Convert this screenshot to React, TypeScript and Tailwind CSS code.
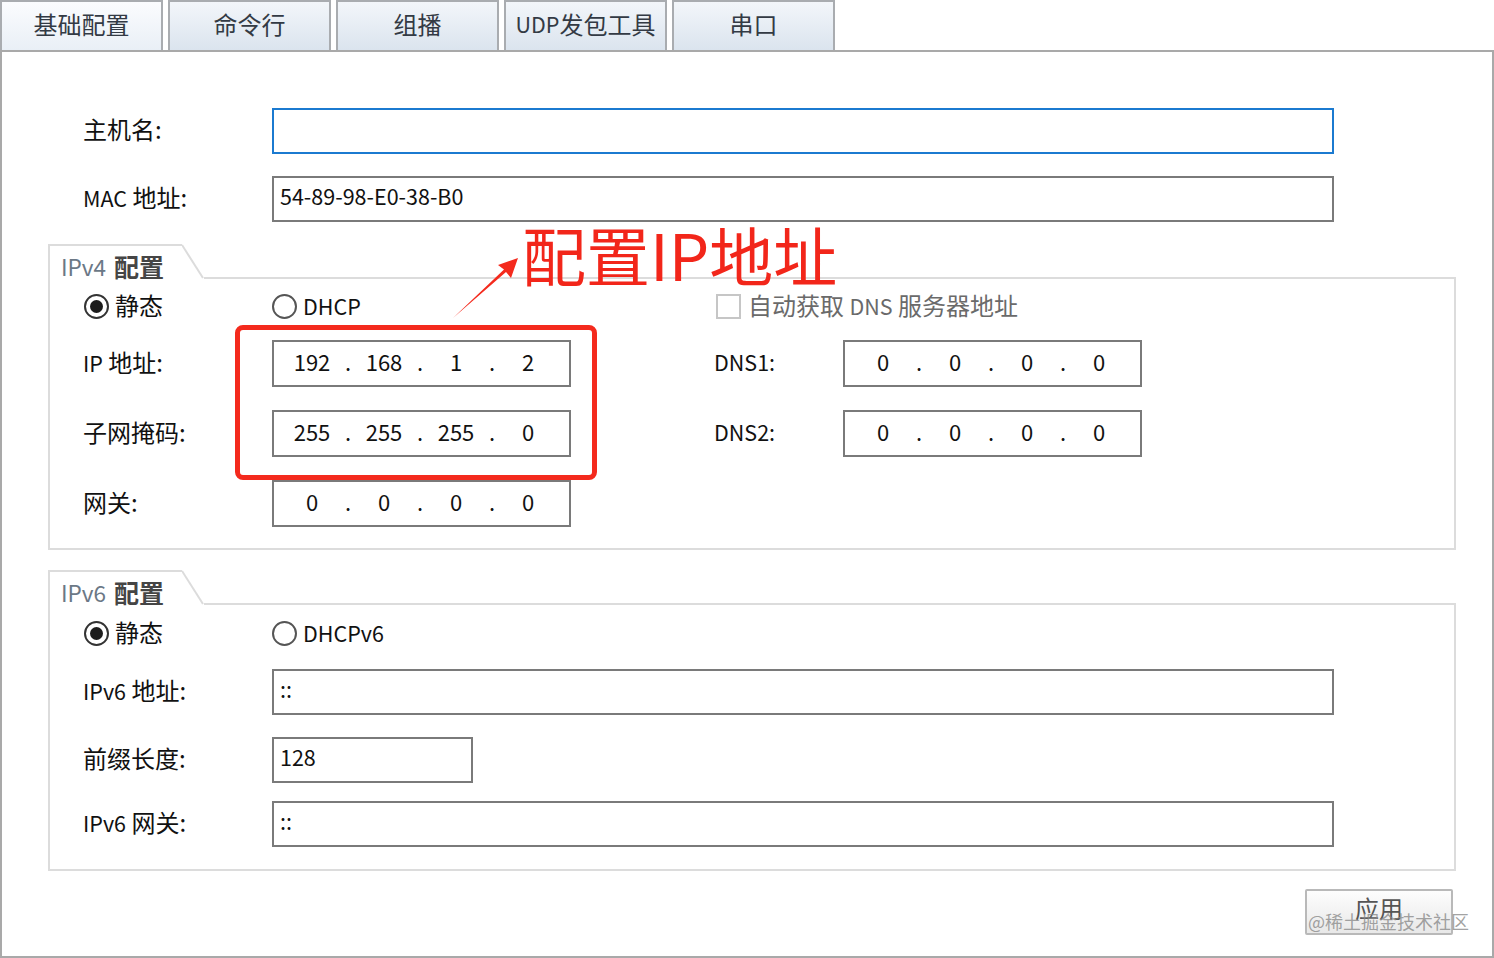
import React from "react";

const tabs = ["基础配置", "命令行", "组播", "UDP发包工具", "串口"];

function L({ children }: { children: React.ReactNode }) {
  return <span className="text-[21.5px]">{children}</span>;
}

function IpBox({ parts }: { parts: string[] }) {
  return (
    <div className="w-[299px] h-[47px] border-2 border-[#7a7a7a] bg-white flex items-center pl-[8px] pb-[6px] text-[22px] leading-none text-[#111]">
      {parts.map((p, i) => (
        <React.Fragment key={i}>
          <span className="w-[60px] text-center">{p}</span>
          {i < 3 && <span className="w-[12px] text-center">.</span>}
        </React.Fragment>
      ))}
    </div>
  );
}

function TextBox({ w, value, focus }: { w: string; value?: string; focus?: boolean }) {
  return (
    <div
      className={`${w} h-[46px] bg-white flex items-center pl-[6px] pb-[6px] text-[21.5px] leading-none text-[#111] border-2 ${
        focus ? "border-[#1b7ad0]" : "border-[#7a7a7a]"
      }`}
    >
      {value}
    </div>
  );
}

function Radio({ checked, children }: { checked?: boolean; children: React.ReactNode }) {
  return (
    <div className="flex items-center gap-[6px]">
      <div
        className={`w-[25px] h-[25px] rounded-full border-2 bg-white flex items-center justify-center ${
          checked ? "border-[#333]" : "border-[#555]"
        }`}
      >
        {checked && <div className="w-[13px] h-[13px] rounded-full bg-[#1c1c1c]" />}
      </div>
      <span className="text-[24px] leading-none text-[#111] pb-[2px]">{children}</span>
    </div>
  );
}

function GroupHeader({ ver }: { ver: string }) {
  return (
    <div className="flex h-[35px]">
      <div className="w-[134px] h-[35px] border-t-2 border-l-2 border-[#dcdcdc] flex items-center pl-[11px] pt-[8px] text-[25px] leading-none">
        <span className="text-[#6b7886] text-[22.5px]">{ver}</span>
        <span className="ml-[8px] font-bold text-[#454545]">配置</span>
      </div>
      <svg width="22" height="35" className="block shrink-0">
        <line x1="0" y1="1" x2="21" y2="34" stroke="#dcdcdc" strokeWidth="2" />
      </svg>
      <div className="flex-1 h-[35px] border-b-2 border-[#dcdcdc]" />
    </div>
  );
}

const labelTop = "w-[270px] pl-[81px] text-[24px] leading-none pb-[4px]";
const labelGrp = "w-[222px] pl-[33px] text-[24px] leading-none pb-[4px]";
const labelDns = "w-[129px] text-[21.5px] leading-none pb-[4px]";

export default function App() {
  return (
    <div className="w-[1494px] h-[958px] bg-white relative overflow-hidden font-['Noto_Sans_CJK_SC','Noto_Sans',sans-serif] text-[#111]">
      {/* Tabs */}
      <div className="flex gap-[6px] h-[50px]">
        {tabs.map((t, i) => (
          <div
            key={t}
            className={`w-[163px] h-[50px] border-2 border-b-0 border-[#a9acb0] flex items-center justify-center text-[24px] leading-none text-[#333a44] pb-[4px] ${
              i === 0
                ? "bg-linear-to-b from-[#fbfcfe] to-[#e9eff6]"
                : "bg-linear-to-b from-[#f3f6fa] to-[#dbe4ee]"
            } ${i === 0 ? "" : "-ml-[1px]"}`}
          >
            {t === "UDP发包工具" ? (
              <>
                <span className="text-[21.5px]">UDP</span>发包工具
              </>
            ) : (
              t
            )}
          </div>
        ))}
      </div>

      {/* Panel */}
      <div className="h-[908px] border-2 border-[#a9a9a9] pt-[56px]">
        <div className="flex items-center h-[46px]">
          <div className={labelTop}>主机名:</div>
          <TextBox w="w-[1062px]" focus />
        </div>
        <div className="flex items-center h-[46px] mt-[22px]">
          <div className={labelTop}>
            <L>MAC</L> 地址:
          </div>
          <TextBox w="w-[1062px]" value="54-89-98-E0-38-B0" />
        </div>

        {/* IPv4 group */}
        <div className="ml-[46px] w-[1408px] mt-[22px]">
          <GroupHeader ver="IPv4" />
          <div className="border-l-2 border-r-2 border-b-2 border-[#dcdcdc] pt-[14px] pb-[21px]">
            <div className="flex items-center h-[26px]">
              <div className="w-[222px] pl-[34px]">
                <Radio checked>静态</Radio>
              </div>
              <div className="w-[444px]">
                <Radio>
                  <L>DHCP</L>
                </Radio>
              </div>
              <div className="flex items-center gap-[7px]">
                <div className="w-[25px] h-[25px] border-2 border-[#c6c6c6] bg-white" />
                <span className="text-[24px] leading-none text-[#6a6a6a] pb-[2px]">
                  自动获取 <L>DNS</L> 服务器地址
                </span>
              </div>
            </div>
            <div className="flex items-center mt-[21px]">
              <div className={labelGrp}>
                <L>IP</L> 地址:
              </div>
              <IpBox parts={["192", "168", "1", "2"]} />
              <div className="w-[143px]" />
              <div className={labelDns}>DNS1:</div>
              <IpBox parts={["0", "0", "0", "0"]} />
            </div>
            <div className="flex items-center mt-[23px]">
              <div className={labelGrp}>子网掩码:</div>
              <IpBox parts={["255", "255", "255", "0"]} />
              <div className="w-[143px]" />
              <div className={labelDns}>DNS2:</div>
              <IpBox parts={["0", "0", "0", "0"]} />
            </div>
            <div className="flex items-center mt-[23px]">
              <div className={labelGrp}>网关:</div>
              <IpBox parts={["0", "0", "0", "0"]} />
            </div>
          </div>
        </div>

        {/* IPv6 group */}
        <div className="ml-[46px] w-[1408px] mt-[20px]">
          <GroupHeader ver="IPv6" />
          <div className="border-l-2 border-r-2 border-b-2 border-[#dcdcdc] pt-[15px] pb-[22px]">
            <div className="flex items-center h-[26px]">
              <div className="w-[222px] pl-[34px]">
                <Radio checked>静态</Radio>
              </div>
              <Radio>
                <L>DHCPv6</L>
              </Radio>
            </div>
            <div className="flex items-center mt-[23px]">
              <div className={labelGrp}>
                <L>IPv6</L> 地址:
              </div>
              <TextBox w="w-[1062px]" value="::" />
            </div>
            <div className="flex items-center mt-[22px]">
              <div className={labelGrp}>前缀长度:</div>
              <TextBox w="w-[201px]" value="128" />
            </div>
            <div className="flex items-center mt-[18px]">
              <div className={labelGrp}>
                <L>IPv6</L> 网关:
              </div>
              <TextBox w="w-[1062px]" value="::" />
            </div>
          </div>
        </div>

        {/* Apply button */}
        <div className="flex justify-end pr-[39px] mt-[18px]">
          <div className="w-[148px] h-[46px] border-2 border-[#b9b9b9] rounded-[2px] bg-linear-to-b from-[#fdfdfd] to-[#e8e8e8] flex items-center justify-center pb-[8px] text-[24px] leading-none text-[#555]">
            应用
          </div>
        </div>
      </div>

      {/* Watermark */}
      <div className="absolute left-[1308px] top-[912px] text-[18px] leading-none text-[#8a8a8a]/80 whitespace-nowrap">
        @稀土掘金技术社区
      </div>

      {/* Red annotation */}
      <div className="absolute left-[235px] top-[325px] w-[362px] h-[155px] border-[5px] border-[#f42a1d] rounded-[8px]" />
      <svg className="absolute left-[450px] top-[250px]" width="75" height="75">
        <polygon points="68,8 48,15 54,19.5 3,68 56,22 61,28" fill="#f42a1d" />
      </svg>
      <div className="absolute left-[522px] top-[221px] text-[64px] leading-none text-[#f2261a] whitespace-nowrap">
        配置IP地址
      </div>
    </div>
  );
}
